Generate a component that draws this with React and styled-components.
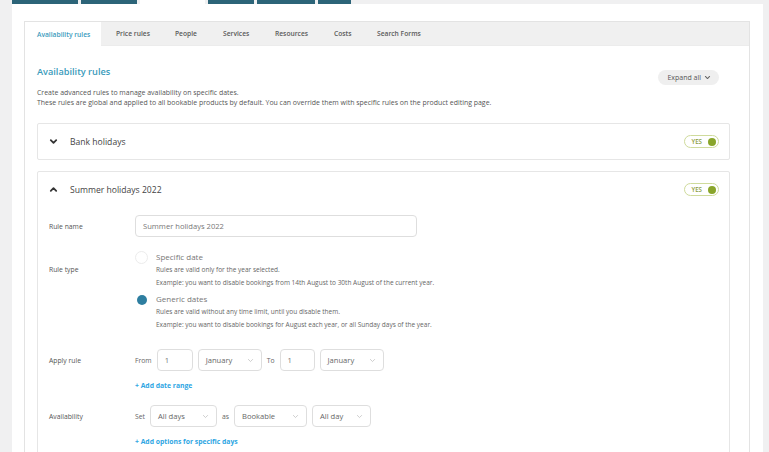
import React from 'react';
import styled, { createGlobalStyle } from 'styled-components';

const GlobalStyle = createGlobalStyle`
  body {
    margin: 0;
    background: #f0f0f1;
    font-family: "Open Sans", "Liberation Sans", sans-serif;
    color: #555;
  }
`;

const Page = styled.div`
  padding: 0 6px 0 12px;
  height: 452px;
  overflow: hidden;
`;

const TopNav = styled.div`
  display: flex;
  gap: 3px;
  height: 4px;
`;

const NavTab = styled.div`
  width: ${p => p.w}px;
  background: ${p => (p.active ? '#fff' : '#2c6478')};
`;

const Panel = styled.div`
  background: #fff;
  padding: 17px 13px 0 12px;
  height: 100%;
`;

const Box = styled.div`
  border: 1px solid #e3e3e3;
  border-bottom: none;
  height: 100%;
`;

const TabBar = styled.div`
  display: flex;
  height: 23px;
  background: #f0f0f0;
  border-bottom: 1px solid #ececec;
`;

const Tab = styled.div`
  box-sizing: border-box;
  display: flex;
  align-items: center;
  flex-shrink: 0;
  width: ${p => (p.w ? `${p.w}px` : 'auto')};
  padding-left: ${p => p.padl}px;
  font-size: 6.7px;
  font-weight: 600;
  white-space: nowrap;
  color: ${p => (p.active ? '#3b9bbd' : '#5a5a5a')};
  background: ${p => (p.active ? '#fff' : 'transparent')};
  margin-bottom: ${p => (p.active ? '-1px' : '0')};
`;

const Content = styled.div`
  padding: 0 19px 0 12px;
`;

const HeadRow = styled.div`
  display: flex;
  justify-content: space-between;
  align-items: flex-start;
  height: 14px;
  padding-top: 19px;
`;

const Heading = styled.h2`
  margin: 0;
  font-size: 9.2px;
  font-weight: 600;
  color: #3a9bbb;
  line-height: 14px;
`;

const ExpandButton = styled.button`
  display: flex;
  align-items: center;
  gap: 3px;
  height: 15px;
  padding: 0 8px 0 9px;
  margin: 5px 11px 0 0;
  border: none;
  border-radius: 8px;
  background: #efefef;
  font-family: inherit;
  font-size: 7px;
  color: #555;
`;

const Description = styled.p`
  margin: 9px 0 0;
  font-size: 6.95px;
  line-height: 10px;
  color: #555;
`;

const Card = styled.div`
  border: 1px solid #e6e6e6;
  border-radius: 2px;
  margin-top: ${p => p.mt}px;
  padding-bottom: ${p => p.pb || 0}px;
  background: #fff;
`;

const CardHeader = styled.div`
  display: flex;
  align-items: center;
  height: 35px;
  padding: 0 10px 0 11px;
`;

const CardTitle = styled.div`
  flex: 1;
  margin-left: 12px;
  font-size: 8.6px;
  color: #444;
`;

const Toggle = styled.div`
  box-sizing: border-box;
  display: flex;
  align-items: center;
  gap: 6px;
  height: 13px;
  padding: 0 2px 0 6px;
  border: 1px solid #cfdb9c;
  border-radius: 7px;
  font-size: 6.2px;
  font-weight: 600;
  color: #8a9b3d;
`;

const Dot = styled.span`
  width: 8px;
  height: 8px;
  border-radius: 50%;
  background: #89a52b;
`;

const FormRow = styled.div`
  display: flex;
  align-items: ${p => p.align || 'center'};
  padding: 0 12px 0 11px;
  margin-top: ${p => p.mt}px;
`;

const Label = styled.div`
  width: 86px;
  flex-shrink: 0;
  font-size: 6.8px;
  color: #555;
  padding-top: ${p => p.pt || 0}px;
`;

const Field = styled.div`
  display: flex;
  flex-direction: column;
`;

const TextInput = styled.div`
  box-sizing: border-box;
  width: ${p => p.w}px;
  height: 22px;
  display: flex;
  align-items: center;
  padding-left: 7px;
  border: 1px solid #dedede;
  border-radius: 4px;
  font-size: 7.6px;
  color: #777;
`;

const Select = styled(TextInput)`
  justify-content: space-between;
  padding-right: 7px;
  color: #666;
`;

const Inline = styled.div`
  display: flex;
  align-items: center;
  gap: ${p => p.gap || 5}px;
`;

const SmallWord = styled.span`
  font-size: 6.8px;
  color: #666;
`;

const AddLink = styled.a`
  margin-top: 10px;
  font-size: 6.8px;
  font-weight: 700;
  color: #2ea6e3;
  text-decoration: none;
`;

const RadioOption = styled.div`
  display: flex;
  gap: 8px;
  margin-top: ${p => p.mt || 0}px;
`;

const RadioCircle = styled.span`
  box-sizing: border-box;
  flex-shrink: 0;
  width: 13px;
  height: 13px;
  border-radius: 50%;
  border: 1px solid ${p => (p.checked ? 'transparent' : '#ececec')};
  display: flex;
  align-items: center;
  justify-content: center;
  &::after {
    content: '';
    width: 10px;
    height: 10px;
    border-radius: 50%;
    background: ${p => (p.checked ? '#2e7ea0' : 'transparent')};
  }
`;

const RadioText = styled.div`
  display: flex;
  flex-direction: column;
`;

const RadioTitle = styled.div`
  font-size: 8px;
  color: #777;
  line-height: 12px;
`;

const RadioHint = styled.div`
  font-size: 6.5px;
  color: #666;
  line-height: 13px;
`;

const Chevron = ({ up, size = 9, color = '#333', width = 2 }) => (
  <svg width={size} height={size} viewBox="0 0 10 10" fill="none">
    <path
      d={up ? 'M2 6.5 L5 3.5 L8 6.5' : 'M2 3.5 L5 6.5 L8 3.5'}
      stroke={color}
      strokeWidth={width}
      strokeLinecap="round"
      strokeLinejoin="round"
    />
  </svg>
);

const tabs = [
  ['Availability rules', 76, 12],
  ['Price rules', 59, 15],
  ['People', 48, 15],
  ['Services', 52, 15],
  ['Resources', 59, 15],
  ['Costs', 43, 15],
  ['Search Forms', 0, 15],
];

const SelectBox = ({ w, children }) => (
  <Select w={w}>
    {children}
    <Chevron size={7} color="#c4c4c4" width={1.2} />
  </Select>
);

export default function App() {
  return (
    <>
      <GlobalStyle />
      <Page>
        <TopNav>
          {[66, 56, 65, 46, 58, 33].map((w, i) => (
            <NavTab key={i} w={w} active={i === 2} />
          ))}
        </TopNav>
        <Panel>
          <Box>
            <TabBar>
              {tabs.map(([t, w, l], i) => (
                <Tab key={t} active={i === 0} w={w} padl={l}>
                  {t}
                </Tab>
              ))}
            </TabBar>
            <Content>
              <HeadRow>
                <Heading>Availability rules</Heading>
                <ExpandButton>
                  Expand all <Chevron size={7} color="#666" width={1.5} />
                </ExpandButton>
              </HeadRow>
              <Description>
                Create advanced rules to manage availability on specific dates.
                <br />
                These rules are global and applied to all bookable products by default. You can override them with specific rules on the product editing page.
              </Description>

              <Card mt={15}>
                <CardHeader>
                  <Chevron />
                  <CardTitle>Bank holidays</CardTitle>
                  <Toggle>
                    YES <Dot />
                  </Toggle>
                </CardHeader>
              </Card>

              <Card mt={11} pb={40}>
                <CardHeader>
                  <Chevron up />
                  <CardTitle>Summer holidays 2022</CardTitle>
                  <Toggle>
                    YES <Dot />
                  </Toggle>
                </CardHeader>

                <FormRow mt={8}>
                  <Label>Rule name</Label>
                  <TextInput w={282}>Summer holidays 2022</TextInput>
                </FormRow>

                <FormRow mt={14} align="flex-start">
                  <Label pt={14}>Rule type</Label>
                  <Field>
                    <RadioOption>
                      <RadioCircle />
                      <RadioText>
                        <RadioTitle>Specific date</RadioTitle>
                        <RadioHint>Rules are valid only for the year selected.</RadioHint>
                        <RadioHint>Example: you want to disable bookings from 14th August to 30th August of the current year.</RadioHint>
                      </RadioText>
                    </RadioOption>
                    <RadioOption mt={4}>
                      <RadioCircle checked />
                      <RadioText>
                        <RadioTitle>Generic dates</RadioTitle>
                        <RadioHint>Rules are valid without any time limit, until you disable them.</RadioHint>
                        <RadioHint>Example: you want to disable bookings for August each year, or all Sunday days of the year.</RadioHint>
                      </RadioText>
                    </RadioOption>
                  </Field>
                </FormRow>

                <FormRow mt={18} align="flex-start">
                  <Label pt={7}>Apply rule</Label>
                  <Field>
                    <Inline>
                      <SmallWord>From</SmallWord>
                      <TextInput w={36}>1</TextInput>
                      <SelectBox w={64}>January</SelectBox>
                      <SmallWord>To</SmallWord>
                      <TextInput w={35}>1</TextInput>
                      <SelectBox w={64}>January</SelectBox>
                    </Inline>
                    <AddLink>+ Add date range</AddLink>
                  </Field>
                </FormRow>

                <FormRow mt={15} align="flex-start">
                  <Label pt={7}>Availability</Label>
                  <Field>
                    <Inline>
                      <SmallWord>Set</SmallWord>
                      <SelectBox w={67}>All days</SelectBox>
                      <SmallWord>as</SmallWord>
                      <SelectBox w={73}>Bookable</SelectBox>
                      <SelectBox w={59}>All day</SelectBox>
                    </Inline>
                    <AddLink>+ Add options for specific days</AddLink>
                  </Field>
                </FormRow>
              </Card>
            </Content>
          </Box>
        </Panel>
      </Page>
    </>
  );
}
